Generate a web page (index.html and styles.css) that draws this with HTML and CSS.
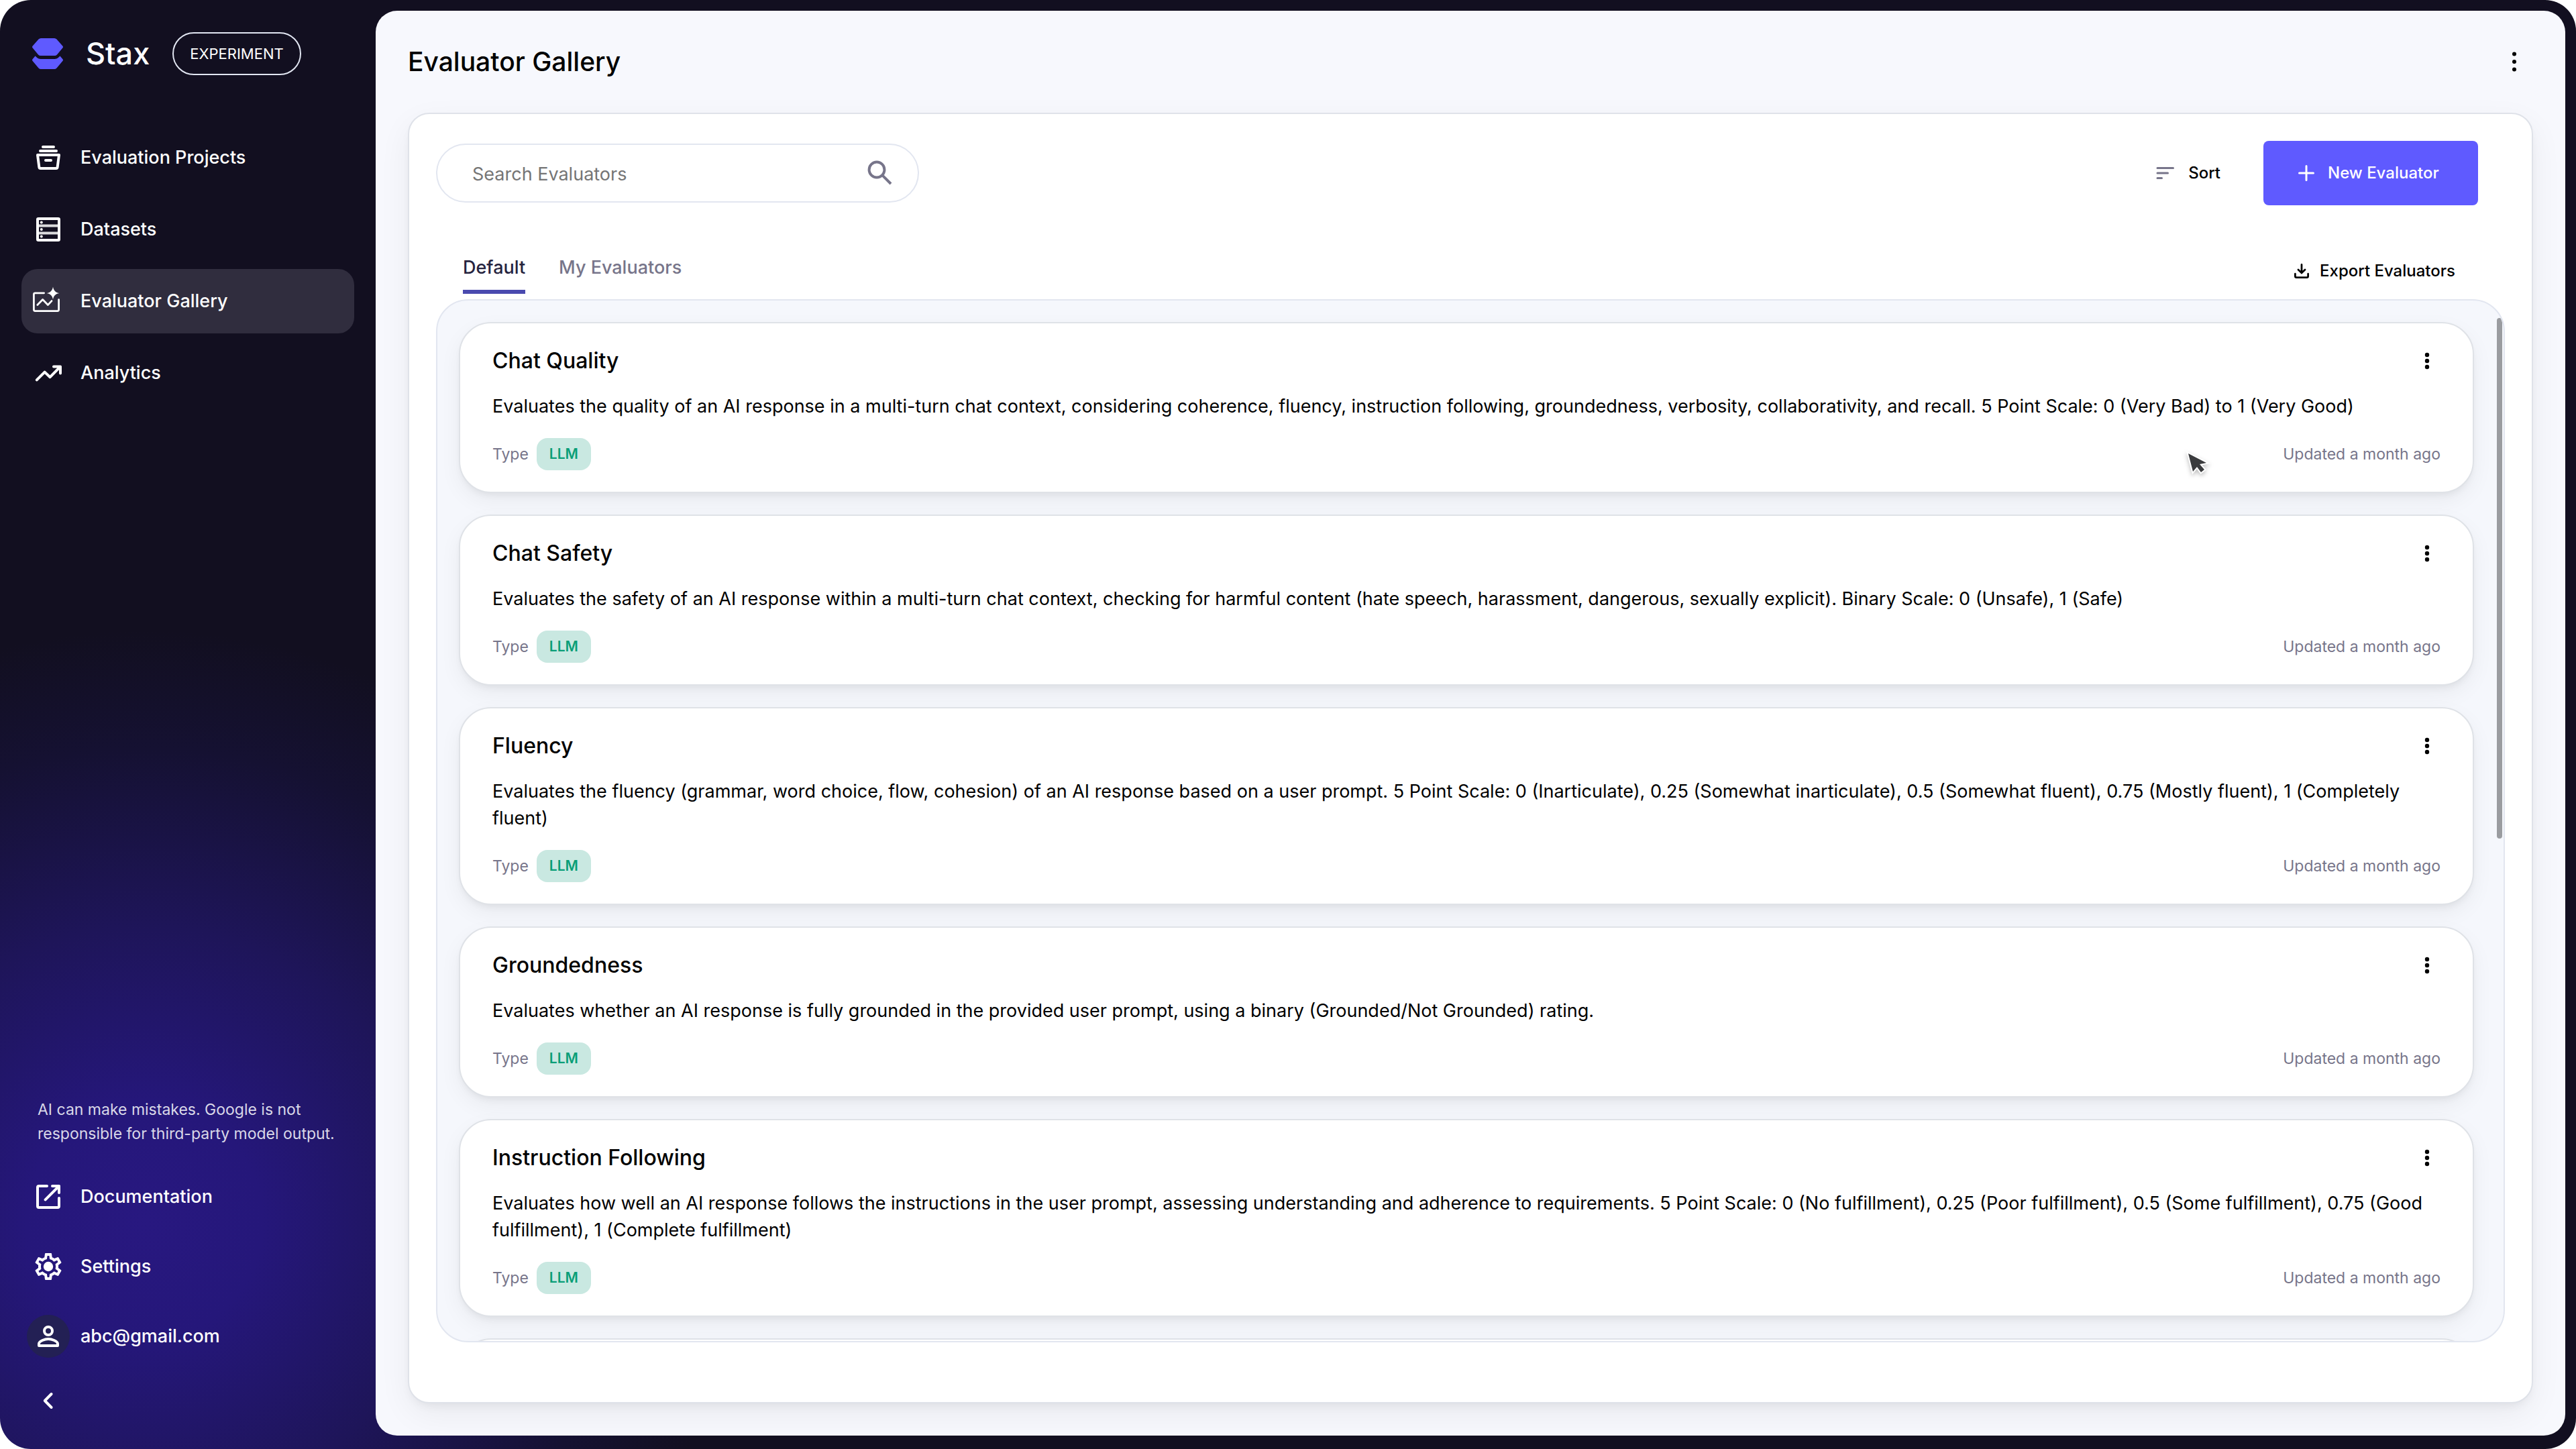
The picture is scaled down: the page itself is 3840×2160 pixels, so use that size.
FILE: index.html
```html
<!DOCTYPE html>
<html lang="en">
<head>
<meta charset="utf-8">
<meta name="viewport" content="width=device-width, initial-scale=1">
<title>Stax - Evaluator Gallery</title>
<link rel="stylesheet" href="styles.css">
</head>
<body>
<svg class="defs" aria-hidden="true">
  <symbol id="more" viewBox="0 0 40 40"><circle cx="20" cy="11" r="3.2"/><circle cx="20" cy="20" r="3.2"/><circle cx="20" cy="29" r="3.2"/></symbol>
</svg>
<div class="shell">
  <aside class="sidebar">
    <div class="brand">
      <svg class="brand-logo" viewBox="0 0 46 46" aria-hidden="true"><path d="M13 0h20q2 0 3.500 1.500L45.300 11.500q1.400 1.500 0 3L37 24.500Q35.500 26 33.500 26h-21Q10.500 26 9 24.500L.7 14.500q-1.400-1.500 0-3L9.500 1.500Q11 0 13 0z"/><path d="M4.500 26.500 7.500 29.300Q9.500 31 12.500 31h21q3 0 5-1.700l3-2.800 3.800 4.500q1.400 1.500 0 3L36.500 44.500Q35 46 33 46H13q-2 0-3.500-1.500L.7 34q-1.400-1.500 0-3z"/></svg>
      <span class="brand-name">Stax</span>
      <span class="brand-tag">EXPERIMENT</span>
    </div>
    <nav class="nav" aria-label="Main">
      <a class="nav-item" href="#projects"><svg class="icon" viewBox="0 0 24 24"><path d="M8 4h8M6 7h12M4 10h16l-1.200 9.200a1 1 0 0 1-1 .8H6.200a1 1 0 0 1-1-.8zM10 14h4"/></svg>Evaluation Projects</a>
      <a class="nav-item" href="#datasets"><svg class="icon" viewBox="0 0 24 24"><rect x="4" y="4" width="16" height="16" rx=".6"/><path d="M4 9.300h16M4 14.700h16" opacity=".85"/><g class="solid"><circle cx="6.900" cy="6.700" r="1"/><circle cx="6.900" cy="12" r="1"/><circle cx="6.900" cy="17.300" r="1"/></g></svg>Datasets</a>
      <a class="nav-item nav-item-active" href="#gallery" aria-current="page"><svg class="icon icon-thin" viewBox="0 0 24 24"><path d="M8.800 5.900H2.200a1 1 0 0 0-1 1v11.400a1 1 0 0 0 1 1h16.600a1 1 0 0 0 1-1v-7.500M3.900 14.800l3.900-4 3.900 4 2.800-3"/><path class="solid" d="M15.500 1.200c.5 2.900 1.900 4.300 4.800 4.800-2.900.5-4.300 1.900-4.800 4.800-.5-2.900-1.900-4.300-4.800-4.800 2.900-.5 4.300-1.900 4.800-4.800z"/></svg>Evaluator Gallery</a>
      <a class="nav-item" href="#analytics"><svg class="icon" viewBox="0 0 24 24"><path d="M3.400 17.200 9.300 11.300l4 3.800L20.800 7.400M16 7.200h5v5"/></svg>Analytics</a>
    </nav>
    <div class="sidebar-foot">
      <p class="disclaimer">AI can make mistakes. Google is not<br>responsible for third-party model output.</p>
      <a class="foot-item" href="#docs"><svg class="icon" viewBox="0 0 24 24"><path d="M11 4H5a1 1 0 0 0-1 1v14a1 1 0 0 0 1 1h14a1 1 0 0 0 1-1v-6M9.800 14.200 20 4M15 4h5v5"/></svg>Documentation</a>
      <a class="foot-item" href="#settings"><svg class="icon" viewBox="0 0 24 24"><path class="solid" d="M19.430 12.980c.04-.32.07-.64.07-.98 0-.34-.03-.66-.07-.98l2.110-1.650c.19-.15.24-.42.12-.64l-2-3.460c-.09-.16-.26-.25-.44-.25-.06 0-.12.01-.17.03l-2.490 1c-.52-.4-1.080-.73-1.690-.98l-.38-2.650C14.460 2.180 14.250 2 14 2h-4c-.25 0-.46.18-.49.42l-.38 2.650c-.61.25-1.170.59-1.690.98l-2.490-1c-.06-.02-.12-.03-.18-.03-.17 0-.34.09-.43.25l-2 3.460c-.13.22-.07.49.12.64l2.110 1.650c-.04.32-.07.65-.07.98 0 .33.03.66.07.98l-2.110 1.650c-.19.15-.24.42-.12.64l2 3.460c.09.16.26.25.44.25.06 0 .12-.01.17-.03l2.490-1c.52.4 1.080.73 1.690.98l.38 2.650c.03.24.24.42.49.42h4c.25 0 .46-.18.49-.42l.38-2.650c.61-.25 1.170-.59 1.690-.98l2.490 1c.06.02.12.03.18.03.17 0 .34-.09.43-.25l2-3.460c.12-.22.07-.49-.12-.64l-2.110-1.650zm-1.980-1.710c.04.31.05.52.05.73 0 .21-.02.43-.05.73l-.14 1.130.89.7 1.080.84-.7 1.210-1.270-.51-1.040-.42-.9.68c-.43.32-.84.56-1.250.73l-1.060.43-.16 1.130-.2 1.350h-1.400l-.19-1.350-.16-1.130-1.060-.43c-.43-.18-.83-.41-1.230-.71l-.91-.7-1.060.43-1.270.51-.7-1.210 1.080-.84.89-.7-.14-1.130c-.03-.31-.05-.54-.05-.74s.02-.43.05-.73l.14-1.130-.89-.7-1.080-.84.7-1.210 1.270.51 1.040.42.9-.68c.43-.32.84-.56 1.250-.73l1.060-.43.16-1.130.2-1.350h1.390l.19 1.350.16 1.130 1.060.43c.43.18.83.41 1.230.71l.91.7 1.060-.43 1.270-.51.7 1.210-1.070.85-.89.7.14 1.130z"/><circle class="solid" cx="12" cy="12" r="3.600"/></svg>Settings</a>
      <a class="foot-item" href="#account"><span class="avatar"><svg class="icon" viewBox="0 0 24 24"><circle cx="12" cy="8" r="3"/><path d="M5 19v-1.400C5 15.500 9.700 14 12 14s7 1.500 7 3.600V19z"/></svg></span>abc@gmail.com</a>
      <button class="collapse" type="button" aria-label="Collapse sidebar"><svg class="icon" viewBox="0 0 24 24"><path d="M14.300 7 9.400 12l4.900 5"/></svg></button>
    </div>
  </aside>

  <main class="main">
    <header class="page-head">
      <h1 class="page-title">Evaluator Gallery</h1>
      <button class="head-more" type="button" aria-label="More options"><svg class="head-more-icon" viewBox="0 0 40 40"><circle cx="20" cy="8.500" r="3"/><circle cx="20" cy="20" r="3"/><circle cx="20" cy="31.500" r="3"/></svg></button>
    </header>

    <section class="panel">
      <div class="toolbar">
        <label class="search">
          <input class="search-input" type="search" placeholder="Search Evaluators" aria-label="Search Evaluators">
          <svg class="search-icon" viewBox="0 0 24 24"><circle cx="9.500" cy="9.500" r="5.700"/><path d="M13.700 13.700 20 20"/></svg>
        </label>
        <div class="actions">
          <button class="sort" type="button"><svg class="sort-icon" viewBox="0 0 28 20"><path d="M2 2.500h23.500M2 10h15.500M2 17.500h6.500"/></svg>Sort</button>
          <button class="primary" type="button"><svg class="plus-icon" viewBox="0 0 24 24"><path d="M12 1.500v21M1.500 12h21"/></svg>New Evaluator</button>
        </div>
      </div>

      <div class="tabs-row">
        <div class="tabs" role="tablist">
          <button class="tab tab-active" type="button" role="tab" aria-selected="true">Default</button>
          <button class="tab" type="button" role="tab" aria-selected="false">My Evaluators</button>
        </div>
        <button class="export" type="button"><svg class="export-icon" viewBox="0 0 24 24"><path d="M12 1.500v13M6.500 9.800l5.500 5.400 5.500-5.400M1.500 16.500v4a2 2 0 0 0 2 2h17a2 2 0 0 0 2-2v-4"/></svg>Export Evaluators</button>
      </div>

      <div class="list">
        <article class="card">
          <div class="card-head"><h2 class="card-title">Chat Quality</h2><button class="card-more" type="button" aria-label="Chat Quality options"><svg class="card-more-icon"><use href="#more"/></svg></button></div>
          <p class="card-text">Evaluates the quality of an AI response in a multi-turn chat context, considering coherence, fluency, instruction following, groundedness, verbosity, collaborativity, and recall. 5 Point Scale: 0 (Very Bad) to 1 (Very Good)</p>
          <div class="card-foot"><span>Type</span><span class="chip">LLM</span><span class="updated">Updated a month ago</span></div>
        </article>
        <article class="card">
          <div class="card-head"><h2 class="card-title">Chat Safety</h2><button class="card-more" type="button" aria-label="Chat Safety options"><svg class="card-more-icon"><use href="#more"/></svg></button></div>
          <p class="card-text">Evaluates the safety of an AI response within a multi-turn chat context, checking for harmful content (hate speech, harassment, dangerous, sexually explicit). Binary Scale: 0 (Unsafe), 1 (Safe)</p>
          <div class="card-foot"><span>Type</span><span class="chip">LLM</span><span class="updated">Updated a month ago</span></div>
        </article>
        <article class="card">
          <div class="card-head"><h2 class="card-title">Fluency</h2><button class="card-more" type="button" aria-label="Fluency options"><svg class="card-more-icon"><use href="#more"/></svg></button></div>
          <p class="card-text">Evaluates the fluency (grammar, word choice, flow, cohesion) of an AI response based on a user prompt. 5 Point Scale: 0 (Inarticulate), 0.25 (Somewhat inarticulate), 0.5 (Somewhat fluent), 0.75 (Mostly fluent), 1 (Completely fluent)</p>
          <div class="card-foot"><span>Type</span><span class="chip">LLM</span><span class="updated">Updated a month ago</span></div>
        </article>
        <article class="card">
          <div class="card-head"><h2 class="card-title">Groundedness</h2><button class="card-more" type="button" aria-label="Groundedness options"><svg class="card-more-icon"><use href="#more"/></svg></button></div>
          <p class="card-text">Evaluates whether an AI response is fully grounded in the provided user prompt, using a binary (Grounded/Not Grounded) rating.</p>
          <div class="card-foot"><span>Type</span><span class="chip">LLM</span><span class="updated">Updated a month ago</span></div>
        </article>
        <article class="card">
          <div class="card-head"><h2 class="card-title">Instruction Following</h2><button class="card-more" type="button" aria-label="Instruction Following options"><svg class="card-more-icon"><use href="#more"/></svg></button></div>
          <p class="card-text">Evaluates how well an AI response follows the instructions in the user prompt, assessing understanding and adherence to requirements. 5 Point Scale: 0 (No fulfillment), 0.25 (Poor fulfillment), 0.5 (Some fulfillment), 0.75 (Good fulfillment), 1 (Complete fulfillment)</p>
          <div class="card-foot"><span>Type</span><span class="chip">LLM</span><span class="updated">Updated a month ago</span></div>
        </article>
        <article class="card"></article>
        <div class="scroll-thumb"></div>
      </div>
    </section>
  </main>
</div>
<svg class="pointer" viewBox="0 0 44 48" aria-hidden="true"><path d="M8 8 15 35l6-7 6 8 5-4-7-8 10-2z"/></svg>
</body>
</html>
```
FILE: styles.css
```css
* {
  box-sizing: border-box;
}

body {
  margin: 0;
  background: #fff;
  color: #000;
  font-family: Inter, "Open Sans", sans-serif;
  font-size: 27px;
  line-height: 40px;
}

h1, h2, p {
  margin: 0;
}

button {
  padding: 0;
  border: 0;
  background: none;
  color: inherit;
  font: inherit;
  cursor: pointer;
}

a {
  color: inherit;
  text-decoration: none;
}

svg {
  display: block;
  flex: none;
}

.defs {
  position: absolute;
  width: 0;
  height: 0;
}

.shell {
  display: flex;
  height: 100vh;
  padding: 16px 16px 20px 0;
  border-radius: 46px;
  background: radial-gradient(circle 880px at 215px calc(100% - 340px), #281880 0%, #25177a 20%, #1e1559 50%, #151132 80%, #120f20 100%);
}

/* Sidebar */

.sidebar {
  display: flex;
  flex: none;
  flex-direction: column;
  width: 560px;
  padding: 32px 32px 8px;
  color: #fff;
}

.brand {
  display: flex;
  align-items: center;
  height: 64px;
  padding-left: 16px;
}

.brand-logo {
  width: 46px;
  height: 46px;
  margin-right: 34px;
  fill: #5f5aff;
}

.brand-name {
  margin-right: 34px;
  font-size: 45px;
  font-weight: 500;
}

.brand-tag {
  height: 64px;
  padding: 0 24px;
  border: 2px solid #e2e6f2;
  border-radius: 32px;
  font-size: 22px;
  line-height: 60px;
}

.nav {
  display: flex;
  flex-direction: column;
  gap: 11px;
  margin-top: 75px;
}

.nav-item,
.foot-item {
  display: flex;
  align-items: center;
  gap: 24px;
  height: 96px;
  padding-left: 16px;
  border-radius: 24px;
  font-weight: 500;
}

.nav-item-active {
  background: #302d3e;
}

.icon {
  width: 48px;
  height: 48px;
  fill: none;
  stroke: #fff;
  stroke-width: 2;
  stroke-linecap: round;
  stroke-linejoin: round;
}

.icon-thin {
  stroke-width: 1.4;
}

.solid {
  fill: #fff;
  stroke: none;
}

.sidebar-foot {
  margin-top: auto;
}

.disclaimer {
  margin-bottom: 24px;
  padding-left: 24px;
  color: #d9d8e8;
  font-size: 23px;
  line-height: 36px;
}

.foot-item {
  height: 104px;
}

.avatar {
  display: flex;
  align-items: center;
  justify-content: center;
  width: 64px;
  height: 64px;
  margin: 0 -8px;
  border-radius: 50%;
  background: #232054;
}

.collapse {
  display: flex;
  align-items: center;
  height: 88px;
  padding-left: 16px;
}

/* Main area */

.main {
  display: flex;
  flex: 1;
  flex-direction: column;
  min-width: 0;
  padding: 0 48px;
  overflow: hidden;
  border-radius: 32px;
  background: #f7f8fd;
}

.page-head {
  display: flex;
  flex: none;
  align-items: center;
  justify-content: space-between;
  height: 152px;
}

.page-title {
  font-size: 39px;
  font-weight: 500;
}

.head-more {
  display: flex;
  justify-content: center;
  width: 56px;
}

.head-more-icon {
  width: 40px;
  height: 40px;
}

.panel {
  display: flex;
  flex: 1;
  flex-direction: column;
  min-height: 0;
  margin-bottom: 48px;
  padding: 40px 40px 89px;
  border: 2px solid #dfe2e9;
  border-radius: 32px;
  background: #fff;
  box-shadow: 0 16px 48px rgba(0, 0, 0, 0.06), 0 8px 16px -6px rgba(0, 0, 0, 0.07);
}

.toolbar {
  display: flex;
  flex: none;
  align-items: center;
  justify-content: space-between;
  padding-right: 40px;
}

.search {
  display: flex;
  align-items: center;
  width: 720px;
  height: 88px;
  padding: 0 32px 0 52px;
  border: 2px solid #e2e6f0;
  border-radius: 44px;
}

.search-input {
  flex: 1;
  min-width: 0;
  padding: 4px 0 0;
  border: 0;
  outline: 0;
  background: none;
  color: #26243f;
  font: inherit;
  line-height: 40px;
}

.search-input::placeholder {
  color: #757575;
}

.search-icon {
  width: 48px;
  height: 48px;
  fill: none;
  stroke: #77758a;
  stroke-width: 2;
}

.actions {
  display: flex;
  align-items: center;
  gap: 64px;
  font-size: 24px;
  font-weight: 500;
}

.sort,
.primary,
.export {
  display: flex;
  align-items: center;
}

.sort {
  gap: 20px;
}

.sort-icon {
  width: 28px;
  height: 20px;
  stroke: #77758a;
  stroke-width: 3;
  stroke-linecap: round;
}

.primary {
  gap: 20px;
  width: 320px;
  height: 96px;
  padding-left: 52px;
  border-radius: 8px;
  background: #5f5aff;
  color: #fff;
}

.plus-icon {
  width: 24px;
  height: 24px;
  stroke: #fff;
  stroke-width: 3;
  stroke-linecap: round;
}

.tabs-row {
  display: flex;
  flex: none;
  align-items: flex-start;
  justify-content: space-between;
  margin: 73px 74px 8px 40px;
}

.tabs {
  display: flex;
  gap: 50px;
}

.tab {
  padding-bottom: 13px;
  border-bottom: 6px solid transparent;
  color: #77758a;
  font-weight: 500;
}

.tab-active {
  border-bottom-color: #4a4aaf;
  color: #26243f;
}

.export {
  gap: 16px;
  height: 50px;
  font-size: 24px;
  font-weight: 500;
}

.export-icon {
  width: 22px;
  height: 22px;
  fill: none;
  stroke: #000;
  stroke-width: 3;
  stroke-linecap: round;
}

/* Evaluator list */

.list {
  position: relative;
  display: flex;
  flex: 1;
  flex-direction: column;
  gap: 32px;
  min-height: 0;
  padding: 32px 44px 32px 32px;
  overflow: hidden;
  border: 2px solid #e2e6f0;
  border-radius: 48px;
  background: #f5f7fc;
}

.card {
  flex: none;
  min-height: 255px;
  padding: 36px 48px 32px;
  border: 2px solid #dfe2e7;
  border-radius: 48px;
  background: #fff;
  box-shadow: 0 12px 32px rgba(0, 0, 0, 0.05), 0 6px 12px -4px rgba(0, 0, 0, 0.07);
}

.card-head {
  display: flex;
  align-items: center;
  justify-content: space-between;
  margin-bottom: 28px;
}

.card-title {
  font-size: 32px;
  font-weight: 500;
}

.card-more-icon {
  width: 40px;
  height: 40px;
}

.card-text {
  margin-bottom: 27px;
}

.card-foot {
  display: flex;
  align-items: center;
  gap: 12px;
  color: #77758a;
  font-size: 23px;
}

.chip {
  height: 48px;
  padding: 0 19px;
  border-radius: 16px;
  background: #c9e8e1;
  color: #0a9e77;
  font-size: 21px;
  font-weight: 600;
  line-height: 48px;
}

.updated {
  margin-left: auto;
}

.scroll-thumb {
  position: absolute;
  top: 26px;
  right: 2px;
  width: 8px;
  height: 50%;
  border-radius: 4px;
  background: #9a9ca0;
}

.pointer {
  position: absolute;
  top: 668px;
  left: 3254px;
  width: 44px;
  height: 48px;
  fill: #3a3b3d;
  stroke: #fff;
  stroke-width: 4;
  paint-order: stroke;
  filter: drop-shadow(0 3px 3px rgba(0, 0, 0, 0.25));
}
```
